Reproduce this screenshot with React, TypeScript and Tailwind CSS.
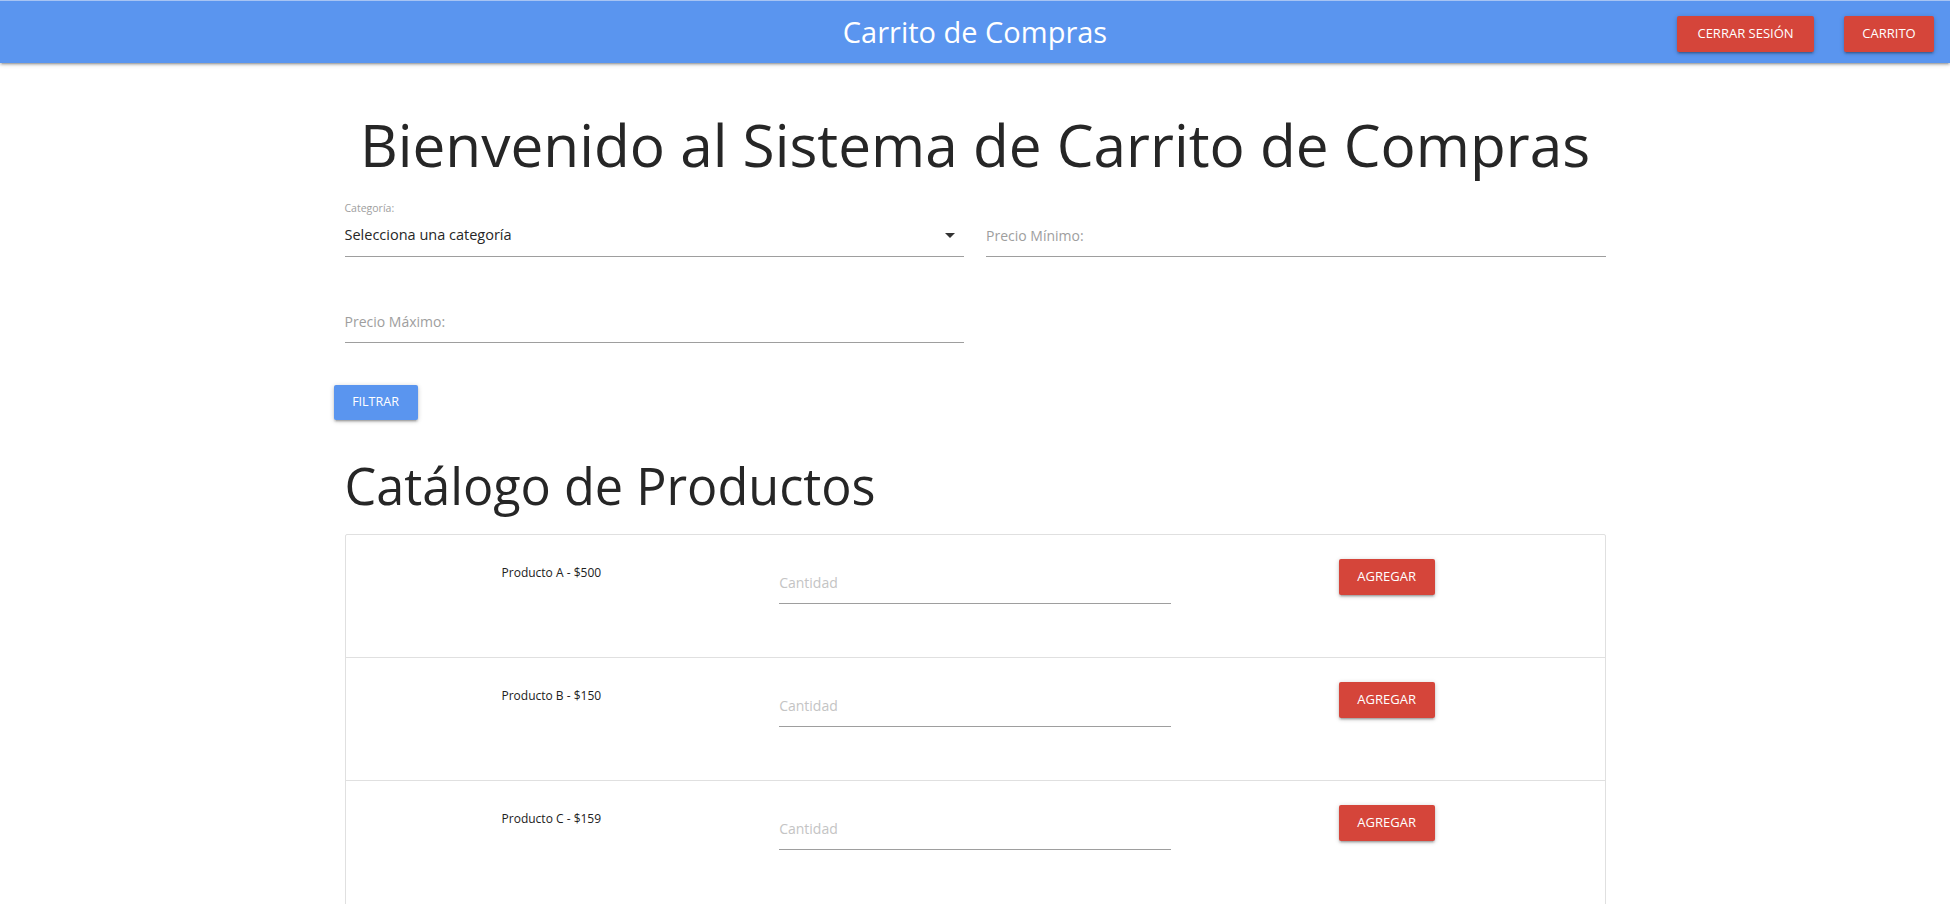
import { ReactNode } from 'react';

const btnShadow =
  'shadow-[0_2px_2px_0_rgba(0,0,0,0.14),0_3px_1px_-2px_rgba(0,0,0,0.12),0_1px_5px_0_rgba(0,0,0,0.2)]';

interface ButtonProps {
  children: ReactNode;
  className?: string;
}

const RedButton = ({ children, className = '' }: ButtonProps) => (
  <button
    className={`h-9 bg-[#d5453a] text-white text-[13px] uppercase rounded-[2px] flex items-center justify-center ${btnShadow} ${className}`}
  >
    {children}
  </button>
);

const products = [
  { name: 'Producto A', price: 500 },
  { name: 'Producto B', price: 150 },
  { name: 'Producto C', price: 159 },
];

const App = () => {
  return (
    <div className="min-h-screen bg-white text-[#262626] font-['Open_Sans',sans-serif]">
      {/* Navbar */}
      <nav className="h-[63px] bg-[#5a95ef] border-t border-[#a7c4f3] grid grid-cols-[1fr_auto_1fr] items-center shadow-[0_2px_2px_0_rgba(0,0,0,0.14),0_3px_1px_-2px_rgba(0,0,0,0.12),0_1px_5px_0_rgba(0,0,0,0.2)]">
        <div />
        <span className="text-white text-[29px] leading-none pb-[2px]">Carrito de Compras</span>
        <div className="flex justify-end gap-[30px] pr-4 pt-[3px]">
          <RedButton className="w-[137px]">Cerrar Sesión</RedButton>
          <RedButton className="w-[90px]">Carrito</RedButton>
        </div>
      </nav>

      <main className="w-[1261px] mx-auto">
        <h1 className="mt-[52px] text-center text-[58.5px] leading-none">
          Bienvenido al Sistema de Carrito de Compras
        </h1>

        {/* Filtros */}
        <div className="mt-[27px] grid grid-cols-2 gap-x-[22px] items-end">
          <div className="flex flex-col">
            <label className="h-[14px] text-[10.5px] leading-[14px] text-[#9e9e9e]">Categoría:</label>
            <div className="h-[42px] border-b border-[#9e9e9e] flex items-center justify-between pr-[9px]">
              <span className="text-[14.5px]">Selecciona una categoría</span>
              <svg width="10" height="5" viewBox="0 0 10 5">
                <path d="M0 0h10L5 5z" fill="#333" />
              </svg>
            </div>
          </div>
          <input
            className="h-[42px] border-b border-[#9e9e9e] text-[14px] outline-none placeholder:text-[#9e9e9e]"
            placeholder="Precio Mínimo:"
          />
          <input
            className="mt-[44px] h-[42px] border-b border-[#9e9e9e] text-[14px] outline-none placeholder:text-[#9e9e9e]"
            placeholder="Precio Máximo:"
          />
        </div>

        <button
          className={`mt-[42px] -ml-[11px] w-[84px] h-[35px] bg-[#5a95ef] text-white text-[12.5px] uppercase rounded-[2px] ${btnShadow}`}
        >
          Filtrar
        </button>

        <h2 className="mt-[41px] text-[50.4px] leading-none">Catálogo de Productos</h2>

        {/* Catálogo */}
        <ul className="mt-[23px] border border-[#e0e0e0] rounded-[2px]">
          {products.map((p) => (
            <li
              key={p.name}
              className="h-[123px] last:h-[130px] border-b last:border-b-0 border-[#e0e0e0] grid grid-cols-3 items-start"
            >
              <div className="mt-[29px] pr-[8px] text-center text-[12px] text-[#212121]">
                {p.name} - ${p.price}
              </div>
              <div className="mt-[27px] px-[14px]">
                <input
                  className="w-full h-[42px] border-b border-[#9e9e9e] text-[14px] outline-none placeholder:text-[#c4c4c4]"
                  placeholder="Cantidad"
                />
              </div>
              <div className="mt-[24px] flex justify-center pr-[16px]">
                <RedButton className="w-[96px]">Agregar</RedButton>
              </div>
            </li>
          ))}
        </ul>
      </main>
    </div>
  );
};

export default App;
